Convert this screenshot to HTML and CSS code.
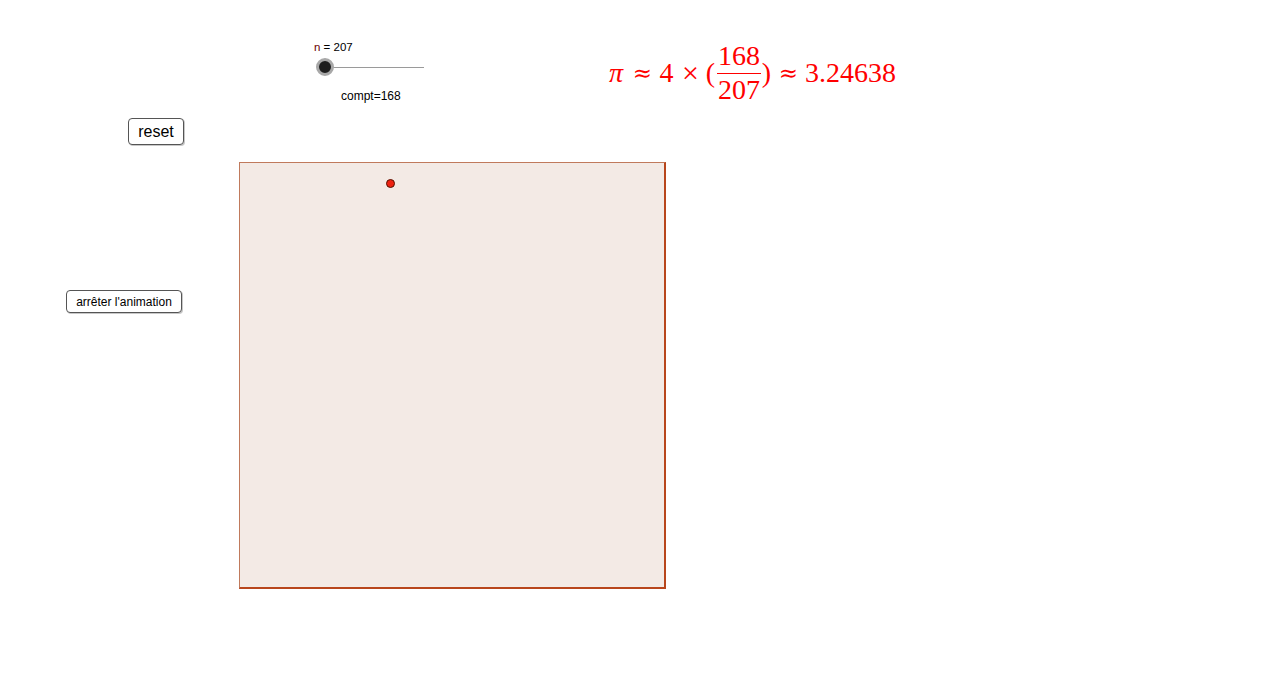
FILE: index.html
```html
<!DOCTYPE html>
<html lang="fr">
<head>
<meta charset="utf-8">
<title>Approximation de pi</title>
<link rel="stylesheet" href="styles.css">
</head>
<body>
<div class="canvas">
  <div class="slider">
    <div class="slider-label"><span class="var">n</span> = 207</div>
    <div class="slider-track">
      <div class="slider-line"></div>
      <div class="slider-knob"></div>
    </div>
  </div>
  <div class="compt">compt=168</div>
  <div class="formula">
    <span class="pi">π</span><span class="op op1">≈</span><span class="four">4</span><span class="op times">×</span><span class="paren lp">(</span><span class="frac"><span class="top">168</span><span class="bar"></span><span class="bot">207</span></span><span class="paren rp">)</span><span class="op op2">≈</span><span class="num">3.24638</span>
  </div>
  <button class="btn btn-reset">reset</button>
  <button class="btn btn-stop">arrêter l'animation</button>
  <div class="square"></div>
  <div class="point"></div>
</div>
</body>
</html>
```

FILE: styles.css
```css
html, body {
  margin: 0;
  padding: 0;
  background: #ffffff;
}
body {
  font-family: "Liberation Sans", Arial, sans-serif;
  color: #000;
}
.canvas {
  position: relative;
  width: 1280px;
  height: 676px;
  overflow: hidden;
}
.slider {
  position: absolute;
  left: 314px;
  top: 41px;
}
.slider-label {
  font-size: 11.5px;
  line-height: 13px;
}
.slider-label .var {
  color: #6b0000;
}
.slider-track {
  position: relative;
  width: 112px;
  height: 20px;
  margin-top: 3px;
}
.slider-line {
  position: absolute;
  left: 11px;
  top: 10px;
  width: 99px;
  height: 1px;
  background: #9a9a9a;
}
.slider-knob {
  position: absolute;
  left: 2px;
  top: 1px;
  width: 12px;
  height: 12px;
  border-radius: 50%;
  background: #1e1e1e;
  border: 3px solid #a8a8a8;
}
.compt {
  position: absolute;
  left: 341px;
  top: 90px;
  font-size: 12px;
  line-height: 13px;
}
.formula {
  position: absolute;
  left: 608px;
  top: 40px;
  height: 66px;
  display: flex;
  align-items: center;
  font-family: "Liberation Serif", "DejaVu Serif", serif;
  font-size: 28px;
  color: #ff0000;
  white-space: nowrap;
}
.formula > span {
  display: inline-block;
  text-align: center;
}
.formula .pi {
  font-style: italic;
  width: 21px;
  text-align: left;
  padding-left: 1px;
  box-sizing: border-box;
}
.formula .op {
  font-family: "DejaVu Serif", serif;
  font-size: 23px;
}
.formula .op1 {
  width: 27px;
}
.formula .four {
  width: 21px;
}
.formula .times {
  width: 27px;
  font-family: "Liberation Serif", serif;
  font-size: 30px;
}
.formula .lp {
  width: 13px;
}
.formula .rp {
  width: 11px;
}
.formula .op2 {
  width: 33px;
}
.formula .num {
  text-align: left;
}
.frac {
  display: inline-flex !important;
  flex-direction: column;
  align-items: center;
  width: 44px;
}
.frac .top, .frac .bot {
  line-height: 26px;
}
.frac .bar {
  align-self: stretch;
  height: 1px;
  background: #ff0000;
  margin: 4px 0 3px;
}
.btn {
  position: absolute;
  font-family: "Liberation Sans", Arial, sans-serif;
  background: #ffffff;
  border: 1px solid #555;
  border-radius: 4px;
  box-shadow: 1px 1px 0 #c8c8c8;
  color: #000;
  padding: 0;
  margin: 0;
}
.btn-reset {
  left: 128px;
  top: 118px;
  width: 56px;
  height: 27px;
  font-size: 16px;
}
.btn-stop {
  left: 66px;
  top: 290px;
  width: 116px;
  height: 23px;
  font-size: 12px;
}
.square {
  position: absolute;
  left: 239px;
  top: 162px;
  width: 424px;
  height: 424px;
  background: #f3eae5;
  border-top: 1px solid #c07a5c;
  border-left: 1px solid #c07a5c;
  border-right: 2px solid #b8461c;
  border-bottom: 2px solid #b8461c;
}
.point {
  position: absolute;
  left: 386px;
  top: 179px;
  width: 7px;
  height: 7px;
  border-radius: 50%;
  background: #ee2211;
  border: 1px solid #551100;
}
```
